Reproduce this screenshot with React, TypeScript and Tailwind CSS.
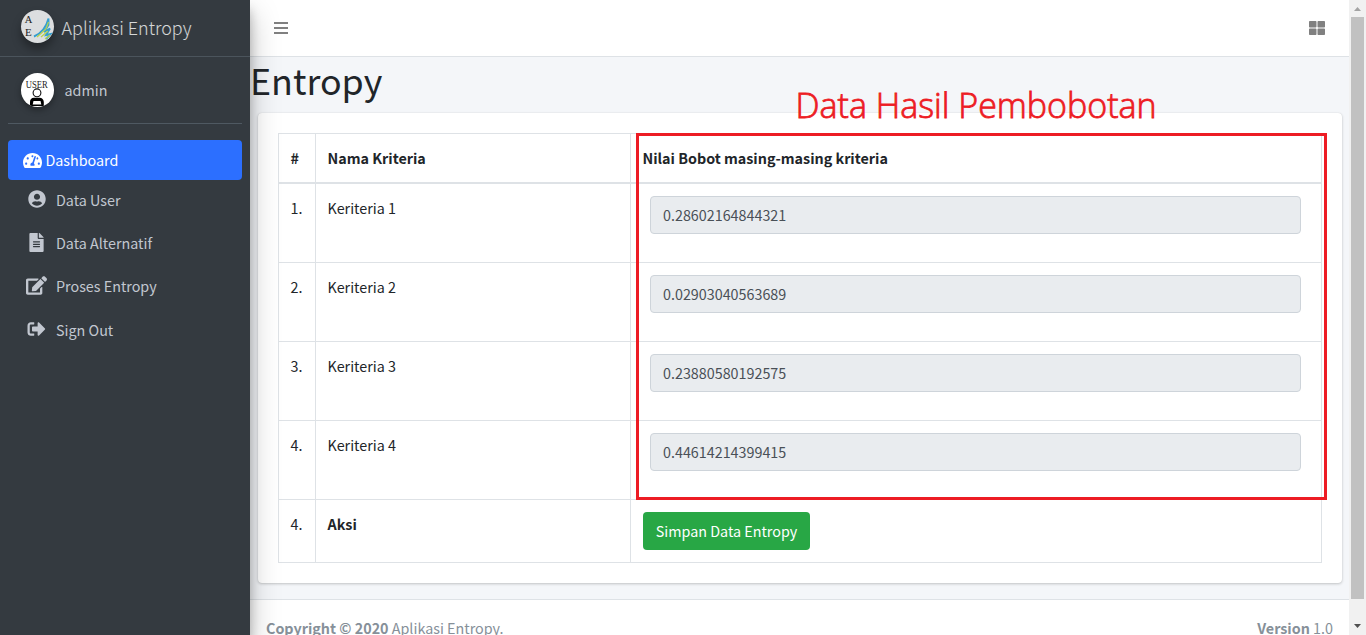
import type { ReactNode } from "react";
import {
  FaTachometerAlt,
  FaUserCircle,
  FaFileAlt,
  FaEdit,
  FaSignOutAlt,
  FaThLarge,
} from "react-icons/fa";

const criteria = [
  { no: "1.", name: "Keriteria 1", value: "0.28602164844321" },
  { no: "2.", name: "Keriteria 2", value: "0.02903040563689" },
  { no: "3.", name: "Keriteria 3", value: "0.23880580192575" },
  { no: "4.", name: "Keriteria 4", value: "0.44614214399415" },
];

const cell = "border-r border-b border-[#dee2e6] pr-3 pl-[11.5px] pt-3 align-top";

function BrandLogo() {
  return (
    <svg viewBox="0 0 33 33" className="size-[33px] rounded-full bg-[#dcdee0] shadow-[0_6px_10px_rgba(0,0,0,0.35)]">
      <text x="3.800" y="12.800" fontSize="10.500" fill="#222" fontFamily="Liberation Serif, serif">A</text>
      <text x="4" y="26" fontSize="11" fill="#222" fontFamily="Liberation Serif, serif">E</text>
      <path d="M13 26.500 C19 24 25 18 27.500 8.500 L27.500 15 L23 22 L29 18.500 L25 25 L29.500 24 L25 29" fill="none" stroke="#359fd0" strokeWidth="1.9" />
      <path d="M16 27 L25 19 L27.500 12 M20 27 L27 21 M24 29 L29 25" fill="none" stroke="#b9d34a" strokeWidth="1.2" />
    </svg>
  );
}

function UserAvatar() {
  return (
    <svg viewBox="0 0 33 34" className="h-[34px] w-[33px] rounded-full bg-white shadow-[0_3px_6px_rgba(0,0,0,0.35)]">
      <text x="4.800" y="14.500" fontSize="9.500" textLength="22" lengthAdjust="spacingAndGlyphs" fill="#222" fontFamily="Liberation Serif, serif">USER</text>
      <circle cx="16" cy="19.800" r="3.900" fill="white" stroke="#111" strokeWidth="1.100" />
      <path d="M9 33 V29 Q9 25 13 24.800 H18.500 Q22.500 25 22.800 29 V33 Z" fill="#000" />
      <path d="M12.500 28 H19.500 L20.300 31.500 H11.700 Z" fill="white" />
    </svg>
  );
}

function NavItem({ icon, label, className }: { icon: ReactNode; label: string; className: string }) {
  return (
    <a className={`flex items-center pl-[15.7px] text-[#c2c7d0] ${className}`}>
      <span className="flex w-[26px] justify-center">{icon}</span>
      <span className="ml-[6.3px]">{label}</span>
    </a>
  );
}

function Sidebar() {
  return (
    <aside className="z-10 flex w-[250px] shrink-0 flex-col bg-[#343a40] shadow-[0_14px_28px_rgba(0,0,0,0.25),0_10px_10px_rgba(0,0,0,0.22)]">
      <div className="flex h-[57px] items-center border-b border-[#4b545c] pb-[3px] pl-[21px]">
        <BrandLogo />
        <span className="ml-[7.6px] text-[17.9px] font-light text-white/80">Aplikasi Entropy</span>
      </div>
      <div className="mx-2 flex h-[67px] items-center border-b border-[#4f5962] pl-[13px]">
        <UserAvatar />
        <span className="ml-[10.5px] text-[#c2c7d0]">admin</span>
      </div>
      <nav className="mx-2 mt-4 flex flex-col">
        <a className="flex h-10 items-center rounded bg-[#2c6fff] pl-[15px] text-white">
          <FaTachometerAlt className="size-[19px]" />
          <span className="ml-[3.4px]">Dashboard</span>
        </a>
        <NavItem className="h-10" label="Data User" icon={<FaUserCircle className="mb-0.5 size-[18px]" />} />
        <NavItem className="h-[46px]" label="Data Alternatif" icon={<FaFileAlt className="mb-0.5 size-[19px]" />} />
        <NavItem className="h-10" label="Proses Entropy" icon={<FaEdit className="mb-0.5 h-[19px] w-[21px]" />} />
        <NavItem className="h-[47px]" label="Sign Out" icon={<FaSignOutAlt className="mb-0.5 h-[18px] w-[19px]" />} />
      </nav>
    </aside>
  );
}

function CriteriaTable() {
  return (
    <table className="w-[1044px] table-fixed border-separate border-spacing-0 border-t border-l border-[#dee2e6]">
      <colgroup>
        <col className="w-[37px]" />
        <col className="w-[315px]" />
        <col className="w-[691px]" />
      </colgroup>
      <thead>
        <tr className="h-[50px] text-left font-bold">
          <th className={`${cell} border-b-2`}>#</th>
          <th className={`${cell} border-b-2`}>Nama Kriteria</th>
          <th className={`${cell} border-b-2`}>Nilai Bobot masing-masing kriteria</th>
        </tr>
      </thead>
      <tbody>
        {criteria.map((c) => (
          <tr key={c.no} className="h-[79px]">
            <td className={cell}>{c.no}</td>
            <td className={cell}>{c.name}</td>
            <td className="border-r border-b border-[#dee2e6] pt-3 pr-5 pl-[19px] align-top">
              <div className="flex h-[38px] items-center rounded border border-[#ced4da] bg-[#e9ecef] px-3 text-[#495057]">
                {c.value}
              </div>
            </td>
          </tr>
        ))}
        <tr className="h-[63px]">
          <td className={cell}>4.</td>
          <td className={`${cell} font-bold`}>Aksi</td>
          <td className="border-r border-b border-[#dee2e6] px-3 pt-3 align-top">
            <button className="flex h-[38px] w-[167px] items-center justify-center rounded bg-[#28a745] text-white">
              Simpan Data Entropy
            </button>
          </td>
        </tr>
      </tbody>
    </table>
  );
}

function Scrollbar() {
  return (
    <div className="flex w-[17px] shrink-0 flex-col items-center bg-[#f1f1f1]">
      <div className="flex h-[17px] items-center">
        <svg viewBox="0 0 7 4" className="mt-px h-1 w-[7px]"><path d="M0 4 L3.500 0 L7 4Z" fill="#a3a3a3" /></svg>
      </div>
      <div className="h-[582px] w-[13px] bg-[#c1c1c1]" />
      <div className="mt-[25px]">
        <svg viewBox="0 0 7 4" className="block h-1 w-[7px]"><path d="M0 0 L3.500 4 L7 0Z" fill="#505050" /></svg>
      </div>
    </div>
  );
}

export default function App() {
  return (
    <div className="relative flex h-[635px] w-[1366px] overflow-hidden bg-[#f4f6f9] font-['Noto_Sans_CJK_JP','Noto_Sans_CJK_SC',sans-serif] text-[14.33px] leading-6 text-[#212529]">
      <Sidebar />
      <div className="flex w-[1099px] shrink-0 flex-col">
        <header className="flex h-[57px] shrink-0 items-center justify-between border-b border-[#dee2e6] bg-white pr-6 pl-6 text-[#808080]">
          <svg viewBox="0 0 14 12" className="h-3 w-[14px]" fill="currentColor">
            <path d="M0 0H14V2H0ZM0 5H14V7H0ZM0 10H14V12H0Z" />
          </svg>
          <FaThLarge className="size-4" />
        </header>
        <h1 className="h-[56px] shrink-0 text-[35.8px] leading-[44px]">Entropy</h1>
        <main className="mx-2 h-[470px] w-[1084px] shrink-0 rounded bg-white pt-5 pl-5 shadow-[0_0_1px_rgba(0,0,0,0.125),0_1px_3px_rgba(0,0,0,0.2)]">
          <CriteriaTable />
        </main>
        <footer className="mt-4 flex h-[58px] shrink-0 justify-between border-t border-[#dee2e6] bg-white p-4 text-[#869099]">
          <span><b>Copyright © 2020</b> Aplikasi Entropy.</span>
          <span><b>Version</b> 1.0</span>
        </footer>
      </div>
      <Scrollbar />
      <div className="absolute top-[133px] left-[636px] z-20 h-[367px] w-[691px] border-3 border-[#ed1c24]" />
      <div className="absolute top-[80px] left-[795.5px] z-20 font-['Open_Sans','Noto_Sans',sans-serif] text-[34px] leading-[50px] font-light whitespace-nowrap text-[#ed1c24] [-webkit-text-stroke:0.8px_#ed1c24]">
        Data Hasil Pembobotan
      </div>
    </div>
  );
}
